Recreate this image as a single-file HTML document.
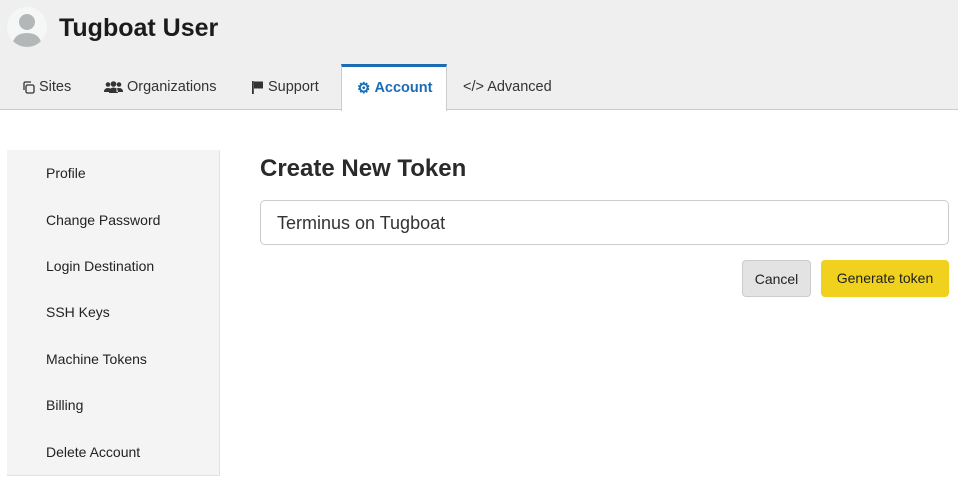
<!DOCTYPE html>
<html><head><style>
*{margin:0;padding:0;box-sizing:border-box}
body{width:958px;height:491px;background:#fff;font-family:"Liberation Sans",sans-serif;color:#222;position:relative;overflow:hidden}
.hdr{position:absolute;left:0;top:0;width:958px;height:110px;background:#efefef;border-bottom:1px solid #ccc}
.av{position:absolute;left:7px;top:7px;width:40px;height:40px;border-radius:50%;background:#f5f6f6;overflow:hidden}
.title{position:absolute;left:59px;top:14px;font-size:25px;font-weight:bold;color:#1b1b1b}
.tab{position:absolute;top:79px;font-size:14.5px;color:#333;display:flex;align-items:center;gap:4px}
.act{position:absolute;left:341px;top:64px;width:106px;height:47px;background:#fff;border-top:3px solid #1a6db5;border-left:1px solid #ccc;border-right:1px solid #ccc}
.side{position:absolute;left:7px;top:150px;width:213px;height:326px;background:#f4f4f4;border-right:1px solid #e2e2e2;border-bottom:1px solid #e2e2e2}
.side div{position:absolute;left:39px;font-size:14px;color:#222}
h1{position:absolute;left:260px;top:155px;font-size:24px;font-weight:bold;color:#2a2a2a}
.inp{position:absolute;left:260px;top:200px;width:689px;height:45px;border:1px solid #ccc;border-radius:5px;font-size:18px;padding:12px 16px;color:#333}
.btn{position:absolute;top:260px;height:37px;border-radius:4px;font-size:14px;text-align:center;line-height:37px;color:#222}
</style></head><body>
<div class="hdr">
<div class="av"><svg width="40" height="40"><circle cx="20" cy="15" r="8" fill="#b4b7b8"/><path d="M5 40 Q6 26 20 26 Q34 26 35 40Z" fill="#b4b7b8"/></svg></div>
<div class="title">Tugboat User</div>
<div class="act"></div>
<div class="tab" style="left:22px"><svg width="13" height="13" viewBox="0 0 13 13" fill="none" stroke="#333" stroke-width="1.3"><rect x="4" y="4" width="8" height="8" rx="1.5"/><path d="M2 9V2.5Q2 1 3.5 1H9"/></svg>Sites</div>
<div class="tab" style="left:104px"><svg width="19" height="12" viewBox="0 0 19 12" fill="#333"><circle cx="4" cy="3.5" r="2.3"/><circle cx="15" cy="3.5" r="2.3"/><circle cx="9.5" cy="3" r="2.8"/><path d="M0 11Q0 7 4 7Q6 7 6.5 8V11ZM19 11Q19 7 15 7Q13 7 12.5 8V11ZM5 12Q5 6.5 9.5 6.5Q14 6.5 14 12Z"/></svg>Organizations</div>
<div class="tab" style="left:251px"><svg width="13" height="14" viewBox="0 0 13 14" fill="#333"><rect x="1" y="1" width="1.8" height="13"/><path d="M3 1.5H12V8.5H3Z"/></svg>Support</div>
<div class="tab" style="left:357px;color:#1a6db5;font-weight:bold"><span style="font-size:15px">⚙</span>Account</div>
<div class="tab" style="left:463px">&lt;/&gt; Advanced</div>
</div>
<div class="side">
<div style="top:15px">Profile</div>
<div style="top:62px">Change Password</div>
<div style="top:108px">Login Destination</div>
<div style="top:154px">SSH Keys</div>
<div style="top:201px">Machine Tokens</div>
<div style="top:247px">Billing</div>
<div style="top:294px">Delete Account</div>
</div>
<h1>Create New Token</h1>
<div class="inp">Terminus on Tugboat</div>
<div class="btn" style="left:742px;width:69px;background:#e3e3e3;border:1px solid #ccc">Cancel</div>
<div class="btn" style="left:821px;width:128px;background:#f0d21e">Generate token</div>
</body></html>
